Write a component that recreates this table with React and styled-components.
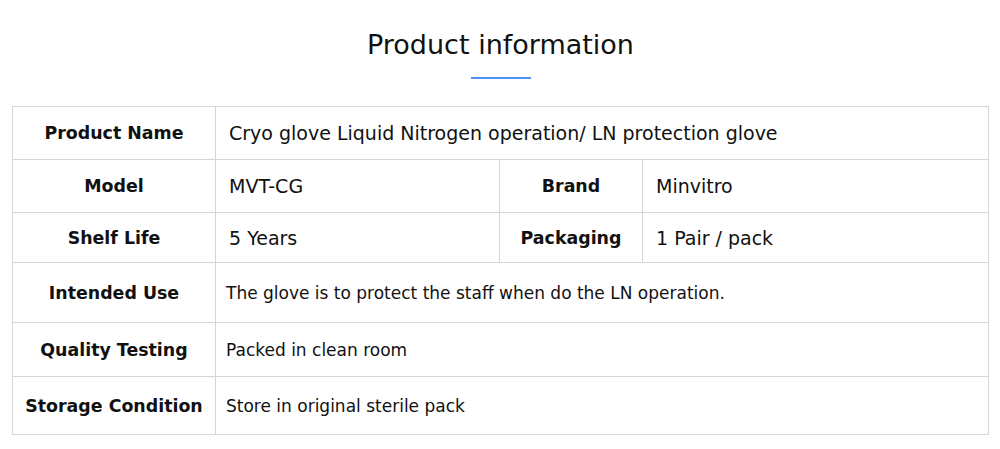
import React from "react";
import styled, { createGlobalStyle } from "styled-components";

const Global = createGlobalStyle`
  html, body { margin: 0; padding: 0; background: #fff; }
  body { font-family: "DejaVu Sans", "Liberation Sans", sans-serif; color: #111; }
  * { box-sizing: border-box; }
`;

const Page = styled.div`
  width: 1000px;
  height: 449px;
  padding: 0 11px 0 12px;
  display: flex;
  flex-direction: column;
`;

const Header = styled.header`
  height: 106px;
  display: flex;
  flex-direction: column;
  align-items: center;
  padding-top: 27px;
`;

const Title = styled.h2`
  margin: 0;
  font-size: 27px;
  line-height: 36px;
  font-weight: 400;
  color: #111;
`;

const Underline = styled.span`
  display: block;
  width: 60px;
  height: 2px;
  margin-top: 14px;
  background: #4d94f5;
`;

const Sheet = styled.div`
  width: 977px;
  display: flex;
  flex-direction: column;
`;

const Row = styled.div`
  display: grid;
  grid-template-columns: ${(p) => p.$cols};
  height: ${(p) => p.$h}px;
  border-top: 1px solid #d5d5d5;
  border-right: 1px solid #d5d5d5;
  ${(p) => (p.$last ? "border-bottom: 1px solid #d5d5d5;" : "")}
`;

const Label = styled.div`
  border-left: 1px solid #d5d5d5;
  display: flex;
  align-items: center;
  justify-content: center;
  font-size: 17.4px;
  font-weight: 700;
  color: #111;
  white-space: nowrap;
`;

const Value = styled.div`
  border-left: 1px solid #d5d5d5;
  display: flex;
  align-items: center;
  padding-left: ${(p) => (p.$small ? 10 : 13)}px;
  font-size: ${(p) => (p.$small ? 17 : 19)}px;
  color: #111;
  white-space: nowrap;
`;

const FOUR = "203px 284px 143px 1fr";
const TWO = "203px 1fr";

export default function App() {
  return (
    <>
      <Global />
      <Page>
        <Header>
          <Title>Product information</Title>
          <Underline />
        </Header>
        <Sheet>
          <Row $cols={TWO} $h={53}>
            <Label>Product Name</Label>
            <Value>Cryo glove Liquid Nitrogen operation/ LN protection glove</Value>
          </Row>
          <Row $cols={FOUR} $h={53}>
            <Label>Model</Label>
            <Value>MVT-CG</Value>
            <Label>Brand</Label>
            <Value>Minvitro</Value>
          </Row>
          <Row $cols={FOUR} $h={50}>
            <Label>Shelf Life</Label>
            <Value>5 Years</Value>
            <Label>Packaging</Label>
            <Value>1 Pair / pack</Value>
          </Row>
          <Row $cols={TWO} $h={60}>
            <Label>Intended Use</Label>
            <Value $small>The glove is to protect the staff when do the LN operation.</Value>
          </Row>
          <Row $cols={TWO} $h={54}>
            <Label>Quality Testing</Label>
            <Value $small>Packed in clean room</Value>
          </Row>
          <Row $cols={TWO} $h={59} $last>
            <Label>Storage Condition</Label>
            <Value $small>Store in original sterile pack</Value>
          </Row>
        </Sheet>
      </Page>
    </>
  );
}
